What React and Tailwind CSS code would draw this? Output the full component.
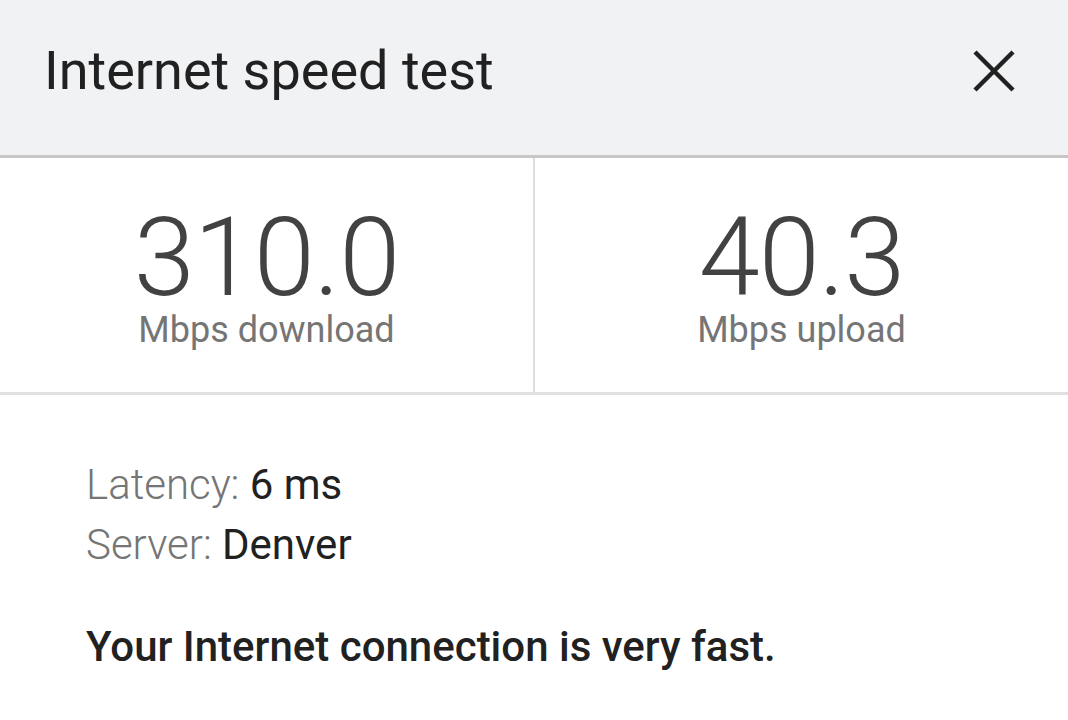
import React from "react";

const CloseIcon = () => (
    <svg width="44" height="44" viewBox="0 0 44 44" fill="none">
        <path d="M3 3 L41 41 M41 3 L3 41" stroke="#212121" strokeWidth="4.5" />
    </svg>
);

const Stat = ({ value, label }) => (
    <div className="flex-1 flex flex-col items-center pt-[52px]">
        <div className="text-[110px] leading-[96px] font-light text-[#424242] tracking-[-1px]">{value}</div>
        <div className="text-[36px] leading-[44px] text-[#757575] mt-[2px]">{label}</div>
    </div>
);

const App = () => {
    return (
        <div className="w-[1068px] h-[720px] bg-white overflow-hidden font-['Roboto',sans-serif]">
            {/* header */}
            <div className="h-[158px] bg-[#f1f2f4] border-b-[3px] border-[#c6c6c6] flex items-center justify-between pl-[44px] pr-[52px]">
                <h1 className="text-[54px] text-[#212121] pb-[14px]">Internet speed test</h1>
                <div className="pb-[14px]"><CloseIcon /></div>
            </div>

            {/* results */}
            <div className="h-[237px] flex border-b-[3px] border-[#e0e0e0]">
                <Stat value="310.0" label="Mbps download" />
                <div className="w-[2px] bg-[#dcdcdc]" />
                <Stat value="40.3" label="Mbps upload" />
            </div>

            <div className="pl-[86px] pt-[60px]">
                <div className="text-[42px] leading-[60px]">
                    <span className="font-light text-[#757575]">Latency: </span>
                    <span className="text-[#212121]">6 ms</span>
                </div>
                <div className="text-[42px] leading-[60px]">
                    <span className="font-light text-[#757575]">Server: </span>
                    <span className="text-[#212121]">Denver</span>
                </div>
                <p className="text-[42px] font-medium text-[#212121] mt-[40px]">Your Internet connection is very fast.</p>
            </div>
        </div>
    );
};

export default App;
